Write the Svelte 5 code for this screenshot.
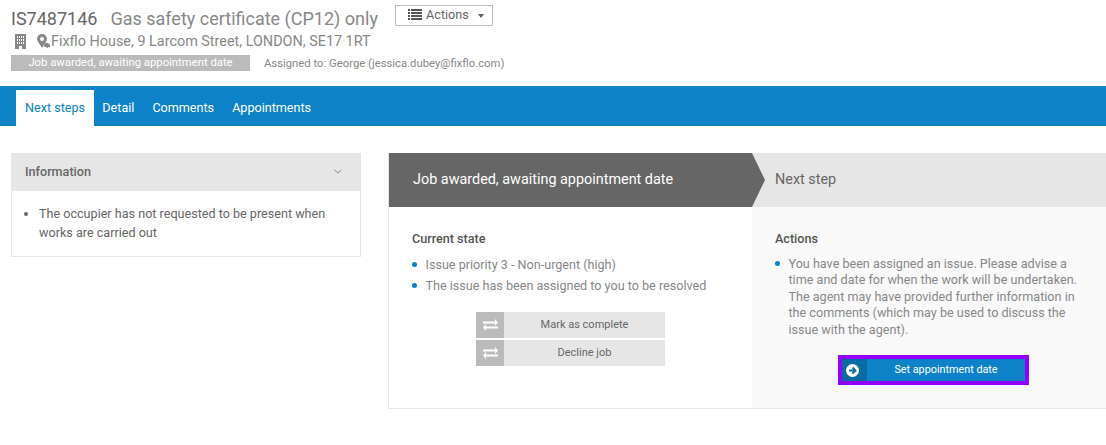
<script>
	const tabs = ['Next steps', 'Detail', 'Comments', 'Appointments'];
	const currentState = ['Issue priority 3 - Non-urgent (high)', 'The issue has been assigned to you to be resolved'];
	const stateActions = ['Mark as complete', 'Decline job'];
</script>

<header class="job-head">
	<div class="title-row">
		<h1><span class="ref">IS7487146</span><span class="job-title">Gas safety certificate (CP12) only</span></h1>
		<button class="actions-btn">
			<svg width="14" height="11" viewBox="0 0 14 11"><path fill="#555" d="M0 0h2v2H0zM3 0h11v2H3zM0 3h2v2H0zM3 3h11v2H3zM0 6h2v2H0zM3 6h11v2H3zM0 9h2v2H0zM3 9h11v2H3z" /></svg>
			Actions
			<span class="caret"></span>
		</button>
	</div>
	<div class="address">
		<svg class="building" width="11" height="15" viewBox="0 0 11 15">
			<path fill="#888" fill-rule="evenodd" d="M0 0h11v15H0zM2 2v2h1V2zM4 2v2h1V2zM6 2v2h1V2zM8 2v2h1V2zM2 5v2h1V5zM4 5v2h1V5zM6 5v2h1V5zM8 5v2h1V5zM2 8v2h1V8zM4 8v2h1V8zM6 8v2h1V8zM8 8v2h1V8zM4 12v3h3v-3z" />
		</svg>
		<svg class="pin" width="13" height="15" viewBox="0 0 13 15">
			<path fill="#888" fill-rule="evenodd" d="M5 0a5 5 0 0 1 5 5c0 1-.4 1.900-1 2.800L5 14 1 7.800C.4 6.900 0 6 0 5a5 5 0 0 1 5-5zm0 3a2 2 0 1 0 0 4 2 2 0 0 0 0-4z" />
			<path fill="#888" d="M8 9h3l2 2v2h-1.500a1 1 0 0 1-2 0H7.500L7 12z" />
		</svg>
		<span>Fixflo House, 9 Larcom Street, LONDON, SE17 1RT</span>
	</div>
	<div class="status-row">
		<span class="status">Job awarded, awaiting appointment date</span>
		<span class="assigned">Assigned to: George (jessica.dubey@fixflo.com)</span>
	</div>
</header>

<nav class="tabs">
	{#each tabs as tab, i}
		<a href="#top" class:active={i === 0}>{tab}</a>
	{/each}
</nav>

<main class="content">
	<aside class="info">
		<div class="info-head">
			<span>Information</span>
			<svg width="8" height="5" viewBox="0 0 8 5"><path d="M.5 1L4 4 7.500 1" fill="none" stroke="#888" /></svg>
		</div>
		<ul>
			<li>The occupier has not requested to be present when works are carried out</li>
		</ul>
	</aside>

	<section class="workflow">
		<div class="step current">
			<h2 class="step-head">Job awarded, awaiting appointment date</h2>
			<div class="step-body">
				<h3>Current state</h3>
				<ul class="blue-list">
					{#each currentState as item}
						<li>{item}</li>
					{/each}
				</ul>
				<div class="state-actions">
					{#each stateActions as label}
						<button class="state-btn">
							<span class="state-icon">
								<svg width="15" height="12" viewBox="0 0 15 12">
									<path fill="#fff" d="M0 2.500h12V0l3 3.500-3 3.500V4.500H0zM15 7.500H3V5L0 8.500 3 12V9.500h12z" />
								</svg>
							</span>
							<span class="state-label">{label}</span>
						</button>
					{/each}
				</div>
			</div>
		</div>
		<div class="step next">
			<h2 class="step-head">Next step</h2>
			<div class="step-body">
				<h3>Actions</h3>
				<ul class="blue-list tight">
					<li>You have been assigned an issue. Please advise a time and date for when the work will be undertaken. The agent may have provided further information in the comments (which may be used to discuss the issue with the agent).</li>
				</ul>
				<button class="primary">
					<span class="primary-icon">
						<svg width="13" height="13" viewBox="0 0 13 13">
							<circle cx="6.500" cy="6.500" r="6.500" fill="#fff" />
							<path d="M3 6.500h6M6.500 3.500l3 3-3 3" fill="none" stroke="#0a6aa3" stroke-width="1.800" />
						</svg>
					</span>
					<span class="primary-label">Set appointment date</span>
				</button>
			</div>
		</div>
	</section>
</main>

<style>
	:global(body) {
		font-family: Roboto, sans-serif;
		color: #666;
		background: #fff;
	}

	button {
		font-family: inherit;
		cursor: pointer;
	}

	.job-head {
		height: 86px;
		padding: 5px 11px 0;
		box-sizing: border-box;
	}

	.title-row {
		display: flex;
		align-items: flex-start;
		height: 27px;
	}

	h1 {
		margin: 0;
		font-size: 18px;
		line-height: 28px;
		font-weight: 400;
		color: #888;
		white-space: nowrap;
	}

	.ref {
		color: #666;
		margin-right: 13px;
	}

	.actions-btn {
		margin: 0 0 0 17px;
		width: 98px;
		height: 21px;
		padding: 0 0 2px 4px;
		border: 1px solid #bbb;
		background: #fff;
		color: #666;
		font-size: 12.600px;
		display: flex;
		align-items: center;
		justify-content: center;
		gap: 4px;
	}

	.caret {
		margin-left: 5px;
		margin-top: 2px;
		border-top: 4px solid #666;
		border-left: 3.500px solid transparent;
		border-right: 3.500px solid transparent;
	}

	.address {
		display: flex;
		align-items: center;
		height: 19px;
		font-size: 14.400px;
		color: #888;
		padding-left: 4px;
	}

	.building {
		margin-right: 11px;
	}

	.pin {
		margin-right: 1px;
	}

	.status-row {
		display: flex;
		align-items: center;
		margin-top: 4px;
	}

	.status {
		width: 239px;
		height: 16px;
		line-height: 16px;
		background: #bbb;
		color: #fff;
		font-size: 11.300px;
		text-align: center;
	}

	.assigned {
		margin-left: 14px;
		font-size: 11.300px;
		color: #888;
	}

	.tabs {
		height: 40px;
		background: #0d82c8;
		box-sizing: border-box;
		padding: 4px 0 0 16px;
		display: flex;
	}

	.tabs a {
		padding: 0 9px;
		font-size: 12.600px;
		line-height: 36px;
		color: #fff;
		text-decoration: none;
	}

	.tabs a.active {
		margin-right: -0.700px;
		background: #fff;
		color: #0d82c8;
	}

	.content {
		display: flex;
		align-items: flex-start;
		padding: 27px 0 0 11px;
		gap: 27px;
	}

	.info {
		width: 350px;
		flex: none;
		box-sizing: border-box;
		border: 1px solid #e6e6e6;
		border-top: 0;
	}

	.info-head {
		height: 38px;
		margin: 0 -1px;
		padding: 0 19px 2px 14px;
		box-sizing: border-box;
		background: #e6e6e6;
		display: flex;
		align-items: center;
		justify-content: space-between;
		font-size: 12.600px;
		font-weight: 500;
		color: #666;
	}

	.info ul {
		margin: 0;
		padding: 13px 20px 14px 27px;
		font-size: 12.600px;
		line-height: 19px;
		color: #666;
	}

	.workflow {
		flex: 1;
		display: flex;
		border-bottom: 1px solid #e6e6e6;
		border-left: 1px solid #e6e6e6;
	}

	.step {
		display: flex;
		flex-direction: column;
	}

	.current {
		width: 363px;
		flex: none;
		position: relative;
		z-index: 1;
	}

	.next {
		flex: 1;
	}

	.step-head {
		margin: 0;
		height: 54px;
		font-size: 14.400px;
		font-weight: 400;
		line-height: 53px;
	}

	.current .step-head {
		background: #666;
		color: #fff;
		padding-left: 24px;
		position: relative;
	}

	.current .step-head::after {
		content: '';
		position: absolute;
		top: 0;
		right: -13px;
		width: 13px;
		height: 54px;
		background: #666;
		clip-path: polygon(0 0, 100% 50%, 0 100%);
	}

	.next .step-head {
		background: #e6e6e6;
		color: #666;
		padding-left: 23px;
	}

	.step-body {
		height: 201px;
		box-sizing: border-box;
		padding: 24px 23px 0;
	}

	.next .step-body {
		background: #f9f9f9;
		padding: 24px 22px 0 23px;
	}

	h3 {
		margin: 0;
		font-size: 12.600px;
		font-weight: 500;
		line-height: 16px;
		color: #555;
	}

	.blue-list {
		list-style: none;
		margin: 7px 0 0;
		padding: 0;
		font-size: 12.600px;
		line-height: 21px;
		color: #888;
	}

	.blue-list li {
		position: relative;
		padding-left: 13.500px;
	}

	.blue-list li::before {
		content: '';
		position: absolute;
		left: 0;
		top: 8px;
		width: 5px;
		height: 5px;
		border-radius: 50%;
		background: #0d82c8;
	}

	.blue-list.tight {
		margin-top: 9px;
		line-height: 16.400px;
		padding-right: 3px;
	}

	.blue-list.tight li::before {
		top: 5px;
	}

	.state-actions {
		margin: 16px 0 0 64px;
		width: 189px;
		display: flex;
		flex-direction: column;
		gap: 2px;
	}

	.state-btn {
		display: flex;
		height: 26px;
		padding: 0;
		border: 0;
		background: #e6e6e6;
		color: #666;
		font-size: 11px;
		align-items: stretch;
	}

	.state-icon {
		width: 28px;
		background: #bbb;
		display: flex;
		align-items: center;
		justify-content: center;
	}

	.state-label {
		flex: 1;
		line-height: 25px;
	}

	.primary {
		display: flex;
		align-items: stretch;
		width: 183px;
		height: 22px;
		margin: 21px 0 0 67px;
		padding: 0;
		border: 0;
		outline: 4px solid #9400ff;
		background: #0d82c8;
		color: #fff;
		font-size: 10.800px;
	}

	.primary-icon {
		width: 25px;
		background: #0a6aa3;
		display: flex;
		align-items: center;
		justify-content: center;
		padding-right: 5px;
		box-sizing: border-box;
	}

	.primary-label {
		flex: 1;
		line-height: 21px;
	}
</style>
